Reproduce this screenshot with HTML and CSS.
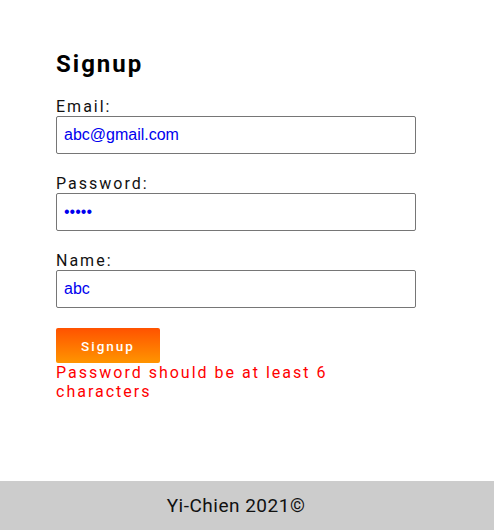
FILE: index.html
```
<!DOCTYPE html>
<html lang="en">
<head>
<meta charset="utf-8">
<title>Signup</title>
<link rel="stylesheet" href="styles.css">
</head>
<body>
<main class="page">
  <form class="signup">
    <h2 class="title">Signup</h2>
    <label class="field">
      <span class="label">Email:</span>
      <input class="input" type="email" value="abc@gmail.com">
    </label>
    <label class="field">
      <span class="label">Password:</span>
      <input class="input" type="password" value="abcde">
    </label>
    <label class="field">
      <span class="label">Name:</span>
      <input class="input" type="text" value="abc">
    </label>
    <button class="btn" type="button">Signup</button>
    <p class="error">Password should be at least 6 characters</p>
  </form>
</main>
<footer class="footer">Yi-Chien 2021©</footer>
</body>
</html>
```
FILE: styles.css
```
html, body {
  margin: 0;
  padding: 0;
}
body {
  min-height: 100vh;
  display: flex;
  flex-direction: column;
  font-family: Roboto, "Liberation Sans", sans-serif;
  color: #000;
  background: #fff;
}
.page {
  flex: 1;
  padding: 50px 56px 0;
}
.signup {
  width: 360px;
  display: flex;
  flex-direction: column;
}
.title {
  margin: 0 0 19px;
  font-size: 24px;
  line-height: 28px;
  font-weight: 700;
  letter-spacing: 2px;
}
.field {
  display: flex;
  flex-direction: column;
  margin-bottom: 20px;
}
.label {
  font-size: 16px;
  line-height: 19px;
  letter-spacing: 2px;
  color: #111;
}
.input {
  box-sizing: border-box;
  width: 360px;
  height: 38px;
  margin: 0;
  padding: 0 7px;
  border: 1px solid #767676;
  border-radius: 2px;
  font-family: "Liberation Sans", Arial, sans-serif;
  font-size: 16px;
  color: #0000ee;
  background: #fff;
}
.btn {
  align-self: flex-start;
  width: 104px;
  height: 35px;
  margin: 0;
  padding: 0;
  border: none;
  border-radius: 2px;
  background: linear-gradient(to bottom, #ff5200, #ff9500);
  color: #fff;
  font-family: Roboto, sans-serif;
  font-size: 13.5px;
  font-weight: 500;
  letter-spacing: 2px;
}
.error {
  margin: 0;
  font-size: 16px;
  line-height: 19px;
  letter-spacing: 2px;
  color: #ff0000;
}
.footer {
  height: 49px;
  display: flex;
  align-items: center;
  justify-content: center;
  padding-right: 22px;
  background: #cccccc;
  font-size: 19px;
  letter-spacing: 0.5px;
  color: #111;
}
```
